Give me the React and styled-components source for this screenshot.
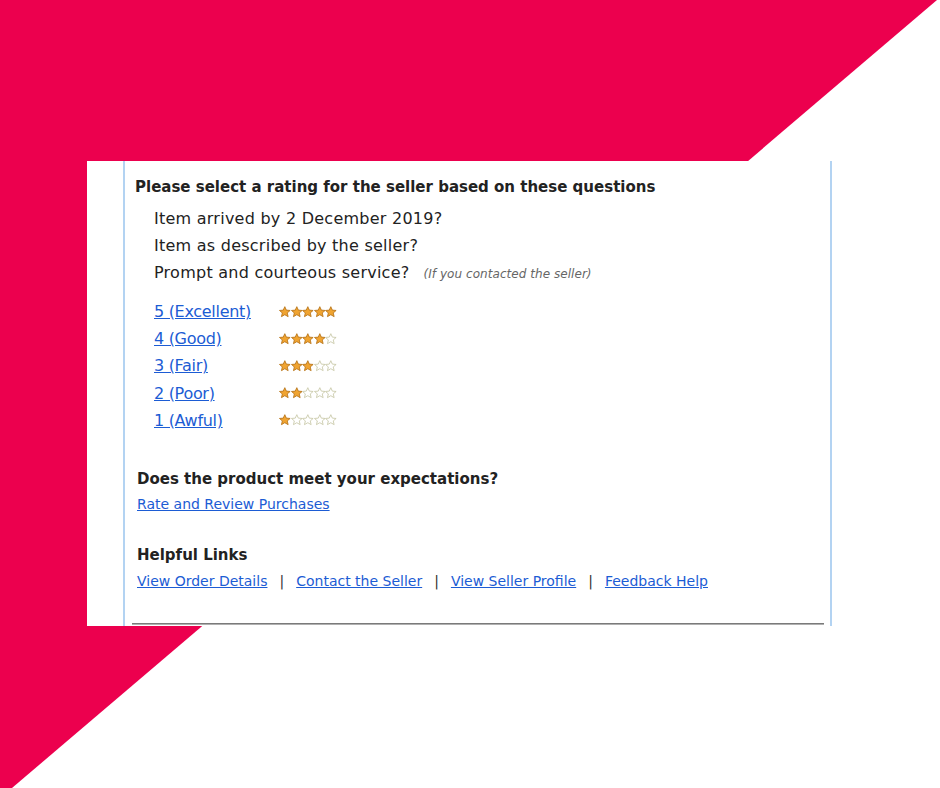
import React from "react";
import styled, { createGlobalStyle } from "styled-components";

const Global = createGlobalStyle`
  html, body { margin: 0; padding: 0; background: #ffffff; }
  body { font-family: "DejaVu Sans", Verdana, sans-serif; color: #222; }
`;

const Page = styled.div`
  position: relative;
  width: 940px;
  height: 788px;
  overflow: hidden;
  background: #ffffff;
  padding: 161px 0 0 87px;
  box-sizing: border-box;
  &::before {
    content: "";
    position: absolute;
    inset: 0;
    background: #ec004e;
    clip-path: polygon(0 0, 937px 0, 12px 788px, 0 788px);
  }
`;

const Panel = styled.div`
  position: relative;
  width: 745px;
  height: 465px;
  background: #ffffff;
  padding-left: 36px;
  box-sizing: border-box;
  display: flex;
`;

const Frame = styled.div`
  flex: 1;
  border-left: 2px solid #b3d3f2;
  border-right: 2px solid #b3d3f2;
  display: flex;
  flex-direction: column;
`;

const Content = styled.div`
  flex: 1;
  padding: 16px 0 0 10px;
`;

const Heading = styled.h2`
  margin: 0;
  font-size: 15px;
  line-height: 20px;
  font-weight: bold;
  color: #222;
  padding-left: ${p => p.$indent || 0}px;
  margin-top: ${p => p.$top || 0}px;
`;

const QuestionList = styled.div`
  margin: 8px 0 0 19px;
  display: flex;
  flex-direction: column;
`;

const Question = styled.div`
  font-size: 16px;
  line-height: 27px;
  letter-spacing: 0.25px;
  color: #222;
  display: flex;
  align-items: baseline;
`;

const Note = styled.span`
  font-size: 12px;
  font-style: italic;
  letter-spacing: 0.05px;
  color: #666;
  margin-left: 14px;
`;

const RatingList = styled.div`
  margin: 10px 0 0 19px;
  display: flex;
  flex-direction: column;
`;

const RatingRow = styled.div`
  display: flex;
  align-items: center;
  height: 27.2px;
`;

const Link = styled.a`
  color: #1c5cd4;
  text-decoration: underline;
  font-size: 14px;
  cursor: pointer;
`;

const RatingLink = styled(Link)`
  width: 125px;
  font-size: 16px;
  line-height: 27px;
  letter-spacing: -0.3px;
`;

const Stars = styled.div`
  display: flex;
  align-items: center;
`;

const LinkBlock = styled.div`
  margin-top: ${p => p.$top || 0}px;
  padding-left: 2px;
  line-height: 18px;
  display: flex;
  align-items: center;
`;

const Sep = styled.span`
  font-size: 14px;
  color: #333;
  margin: 0 12px;
`;

const Rule = styled.div`
  height: 1px;
  background: #7a7a7a;
  margin: 0 6px 1px 7px;
  border-bottom: 1px solid #b0b0b0;
`;

const Star = ({ filled }) => (
  <svg width="11.6" height="12" viewBox="0 0 24 24" style={{ display: "block" }}>
    <path
      d="M12 1l3.2 7.1 7.8.7-5.9 5.1 1.8 7.7L12 17.6l-6.9 4 1.8-7.7L1 8.8l7.8-.7z"
      fill={filled ? "#f0a431" : "#ffffff"}
      stroke={filled ? "#b8741a" : "#c9c9a8"}
      strokeWidth="1.8"
      strokeLinejoin="round"
    />
  </svg>
);

const StarRating = ({ value }) => (
  <Stars>
    {[1, 2, 3, 4, 5].map(i => (
      <Star key={i} filled={i <= value} />
    ))}
  </Stars>
);

const ratings = [
  [5, "Excellent"],
  [4, "Good"],
  [3, "Fair"],
  [2, "Poor"],
  [1, "Awful"],
];

const helpful = ["View Order Details", "Contact the Seller", "View Seller Profile", "Feedback Help"];

export default function App() {
  return (
    <>
      <Global />
      <Page>
        <Panel>
          <Frame>
            <Content>
              <Heading>Please select a rating for the seller based on these questions</Heading>
              <QuestionList>
                <Question>Item arrived by 2 December 2019?</Question>
                <Question>Item as described by the seller?</Question>
                <Question>
                  Prompt and courteous service?<Note>(If you contacted the seller)</Note>
                </Question>
              </QuestionList>
              <RatingList>
                {ratings.map(([n, label]) => (
                  <RatingRow key={n}>
                    <RatingLink>{`${n} (${label})`}</RatingLink>
                    <StarRating value={n} />
                  </RatingRow>
                ))}
              </RatingList>
              <Heading $indent={2} $top={35}>Does the product meet your expectations?</Heading>
              <LinkBlock $top={6}>
                <Link>Rate and Review Purchases</Link>
              </LinkBlock>
              <Heading $indent={2} $top={32}>Helpful Links</Heading>
              <LinkBlock $top={7}>
                {helpful.map((t, i) => (
                  <React.Fragment key={t}>
                    {i > 0 && <Sep>|</Sep>}
                    <Link>{t}</Link>
                  </React.Fragment>
                ))}
              </LinkBlock>
            </Content>
            <Rule />
          </Frame>
        </Panel>
      </Page>
    </>
  );
}
